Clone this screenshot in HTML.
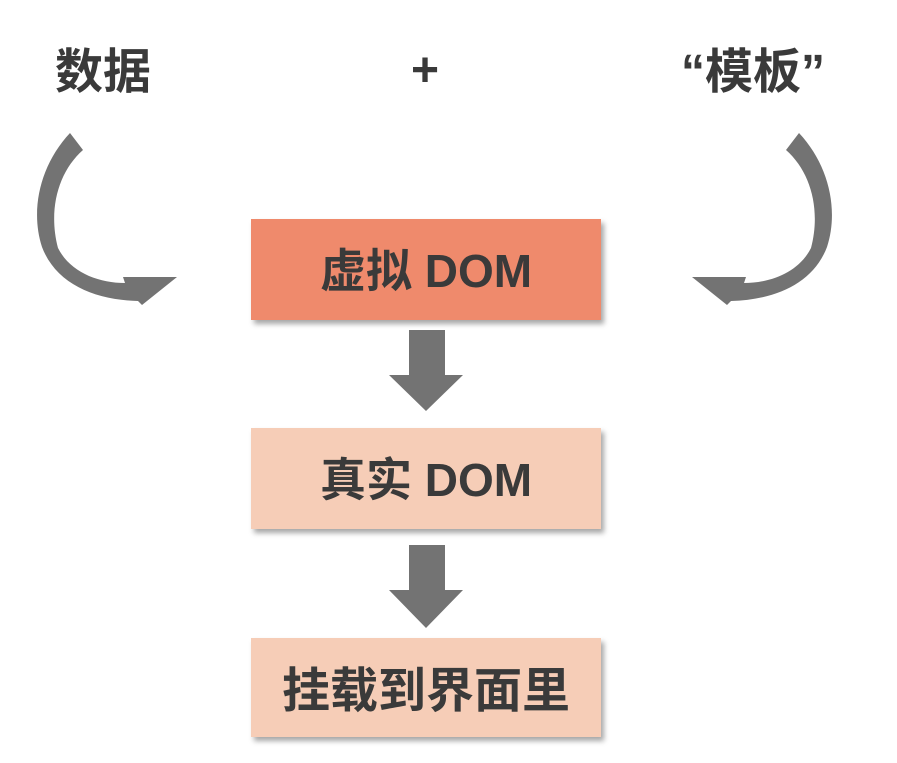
<!DOCTYPE html>
<html><head><meta charset="utf-8"><style>
html,body{margin:0;padding:0;background:#fff;width:897px;height:763px;overflow:hidden}
body{position:relative;font-family:"Liberation Sans","Noto Sans CJK SC",sans-serif;font-weight:bold;color:#3a3a3a}
.t{position:absolute;font-size:48px;line-height:1;white-space:nowrap}
.box{position:absolute;left:251px;width:350px;height:101px;box-shadow:3px 4px 5px rgba(0,0,0,0.35);display:flex;align-items:center;justify-content:center;font-size:46px;color:#3a3a3a;padding-bottom:4px;box-sizing:border-box}
</style></head><body>
<div class="t" style="left:55px;top:49px">数据</div>
<div class="t" style="left:411px;top:47px">+</div>
<div class="t" style="left:681px;top:49px">“模板”</div>
<svg width="897" height="763" style="position:absolute;left:0;top:0">
<g fill="#737373">
<path id="ca" d="M70,133 L83,150 C58,172 48,210 58,248 C70,272 98,283 125,283 L123,277 L177,277 L142,305 L138,301 C95,300 56,284 42,247 C30,210 40,165 70,133 Z"/>
<use href="#ca" transform="translate(869,0) scale(-1,1)"/>
<path d="M409,330 H445 V375 H463 L426,411 L389,375 H409 Z"/>
<path d="M409,545 H445 V590 H463 L426,628 L389,590 H409 Z"/>
</g>
</svg>
<div class="box" style="top:219px;background:#ef8a6c">虚拟 DOM</div>
<div class="box" style="top:428px;background:#f6cdb7">真实 DOM</div>
<div class="box" style="top:638px;height:99px;background:#f6cdb7;font-size:48px">挂载到界面里</div>
</body></html>
